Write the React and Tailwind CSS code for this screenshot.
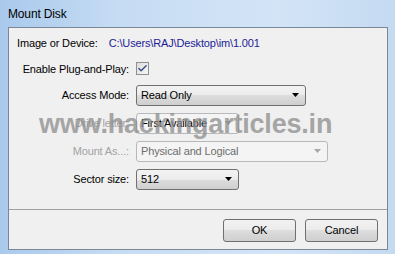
import { Check } from 'lucide-react'

const FONT = { fontFamily: '"Liberation Sans", Arial, sans-serif' }

function Arrow({ disabled }) {
  return (
    <svg width="7" height="4" viewBox="0 0 7 4" className="shrink-0">
      <path d="M0 0h7L3.5 4z" fill={disabled ? '#a7a7a7' : '#000'} />
    </svg>
  )
}

function Combo({ value, width, disabled, dimText }) {
  return (
    <div
      className={
        'flex h-[21px] items-center justify-between rounded-[3px] border pl-[4px] pr-[6px] ' +
        (disabled
          ? 'border-[#b5b9bd] bg-[#f4f4f4]'
          : 'border-[#707070] bg-[linear-gradient(#f3f3f3,#ebebeb_50%,#dddddd_50%,#cfcfcf)]')
      }
      style={{ width }}
    >
      <span className={dimText ? 'text-[#6d6d6d]' : 'text-black'}>{value}</span>
      <Arrow disabled={disabled} />
    </div>
  )
}

function Row({ label, dim, children }) {
  return (
    <div className="flex items-center">
      <div className={'w-[121px] pr-[1px] text-right ' + (dim ? 'text-[#a3a3a3]' : 'text-black')}>
        {label}
      </div>
      <div className="ml-[6px]">{children}</div>
    </div>
  )
}

function Button({ children }) {
  return (
    <button className="h-[23px] w-[73px] rounded-[3px] border border-[#707070] bg-[linear-gradient(#f2f2f2,#ebebeb_50%,#dddddd_50%,#cfcfcf)] text-black">
      {children}
    </button>
  )
}

export default function App() {
  return (
    <div
      className="relative flex h-[254px] w-[395px] flex-col overflow-hidden bg-[linear-gradient(90deg,#a9c9ec,#c6dcf3_30%,#d3e4f7_70%,#c4daf1)] text-[11px] tracking-[-0.15px]"
      style={FONT}
    >
      {/* title bar */}
      <div className="flex h-[27px] items-center pl-[8px] text-[12px] text-black">Mount Disk</div>

      <div className="flex flex-1 pl-[8px] pr-[7px] pb-[4px]">
        <div className="flex flex-1 flex-col border border-[#7a8796] bg-[#f0f0f0]">
          <div className="h-[181px] pl-[8px]">
            <div className="mt-[8px] flex h-[14px] items-center">
              <span>Image or Device:</span>
              <span className="ml-[11px] text-[#1c1c94]">C:\Users\RAJ\Desktop\im\1.001</span>
            </div>

            <div className="-ml-[8px] mt-[11px] flex flex-col gap-[7px]">
              <Row label="Enable Plug-and-Play:">
                <div className="mb-[1px] flex h-[13px] w-[13px] items-center justify-center border border-[#8e8f8f] bg-[linear-gradient(135deg,#dcdcdc,#f8f8f8)]">
                  <Check size={11} strokeWidth={3} className="text-[#3a4a84]" />
                </div>
              </Row>
              <Row label="Access Mode:">
                <Combo value="Read Only" width={170} />
              </Row>
              <Row label="Drive letter:" dim>
                <Combo value="First Available" width={103} disabled />
              </Row>
              <Row label="Mount As...:" dim>
                <Combo value="Physical and Logical" width={192} disabled dimText />
              </Row>
              <Row label="Sector size:">
                <Combo value="512" width={103} />
              </Row>
            </div>
          </div>

          <div className="border-t border-[#a0a0a0]" />

          <div className="flex flex-1 items-start justify-end gap-[9px] pr-[9px] pt-[9px]">
            <Button>OK</Button>
            <Button>Cancel</Button>
          </div>
        </div>
      </div>

      {/* watermark */}
      <div className="pointer-events-none absolute left-[39px] top-[104px] text-[27px] font-bold tracking-[-0.2px] text-[#8c8c8c] opacity-75">
        www.hackingarticles.in
      </div>
    </div>
  )
}
